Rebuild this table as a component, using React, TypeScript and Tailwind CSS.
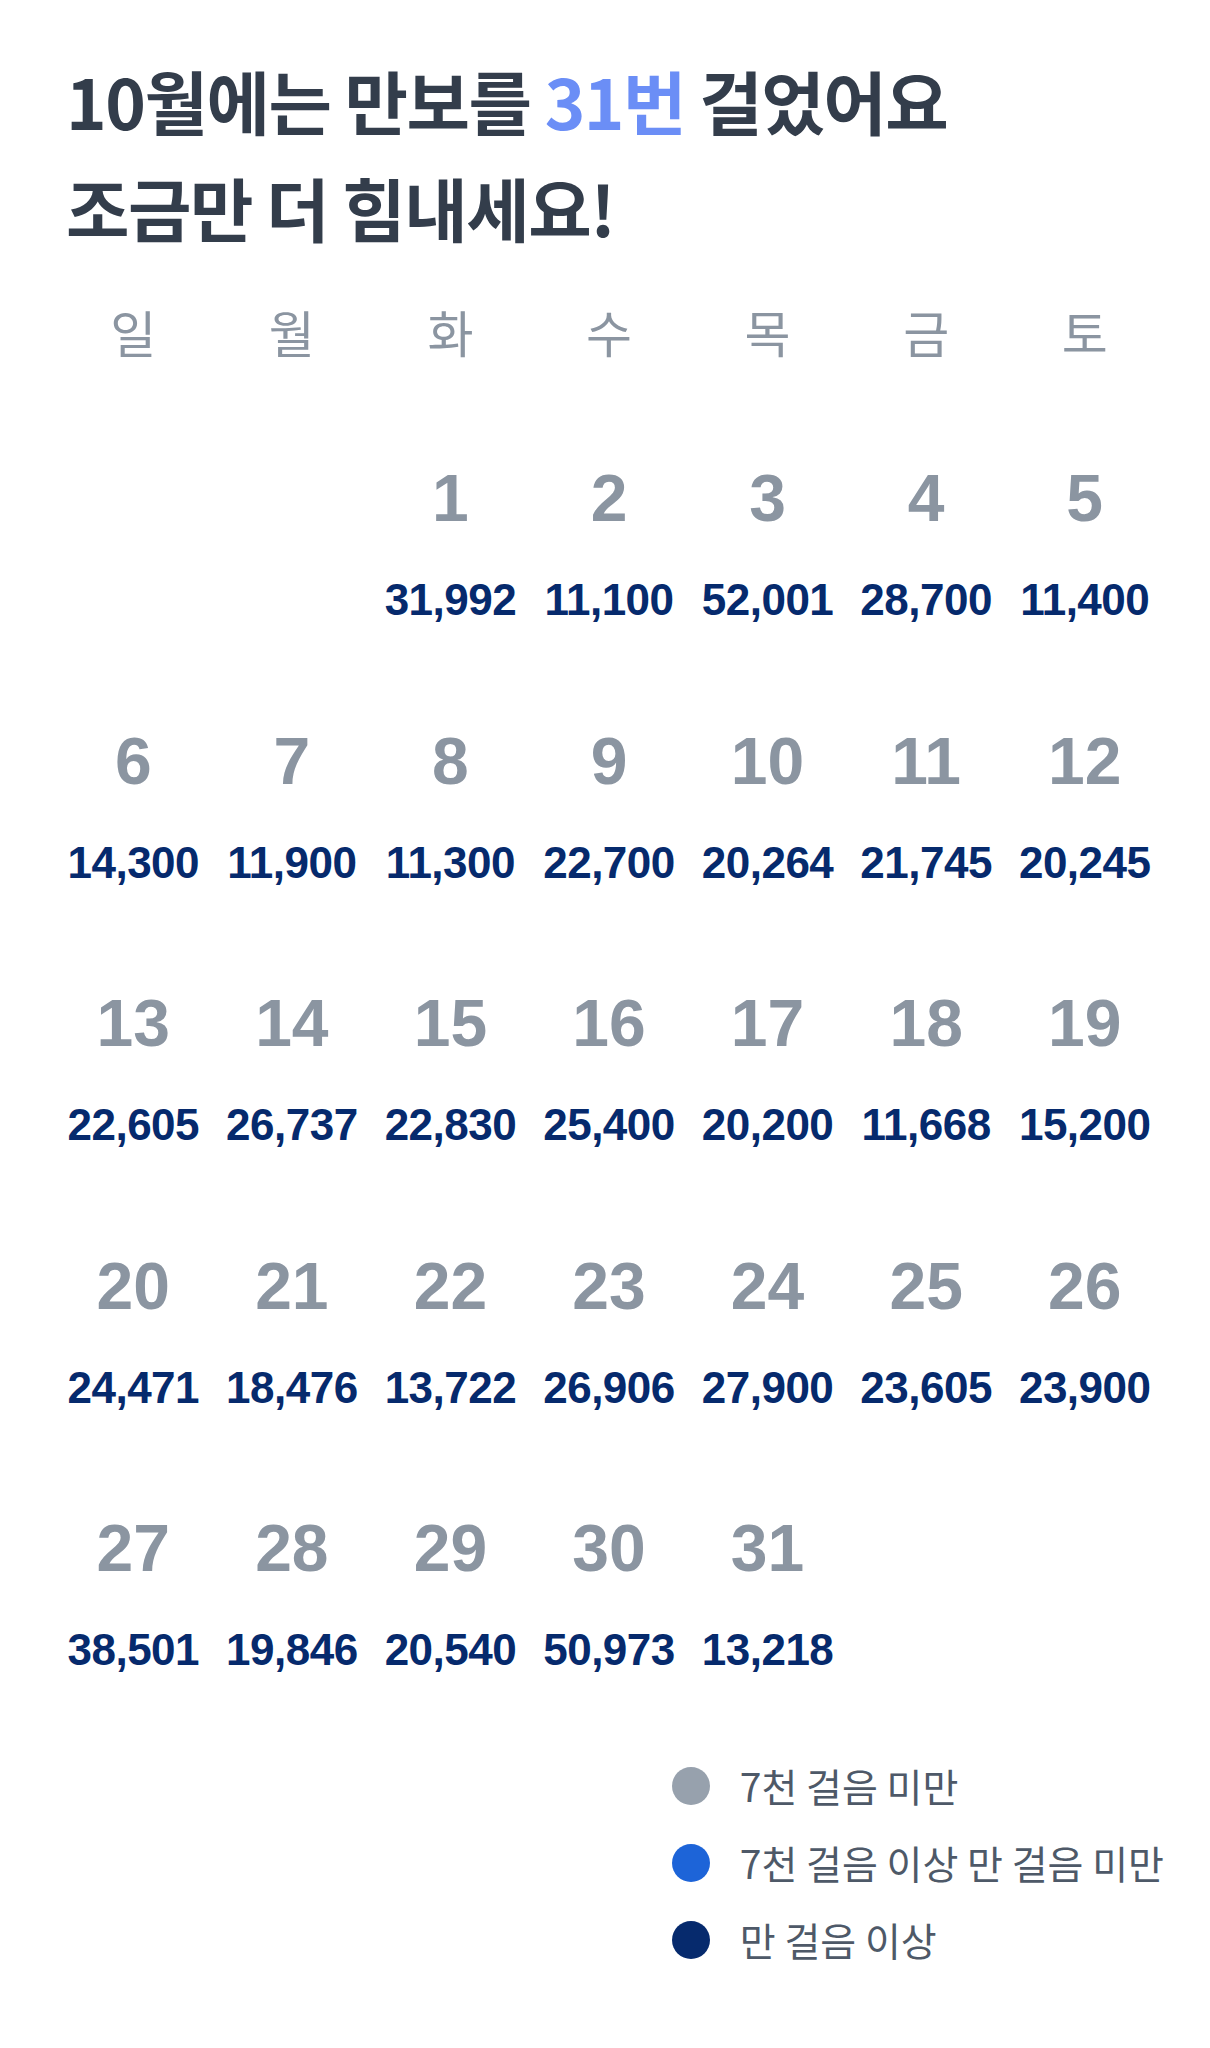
import React from 'react';

const WEEKDAYS = ['일', '월', '화', '수', '목', '금', '토'];

const STEPS: Record<number, number> = {
  1: 31992, 2: 11100, 3: 52001, 4: 28700, 5: 11400,
  6: 14300, 7: 11900, 8: 11300, 9: 22700, 10: 20264, 11: 21745, 12: 20245,
  13: 22605, 14: 26737, 15: 22830, 16: 25400, 17: 20200, 18: 11668, 19: 15200,
  20: 24471, 21: 18476, 22: 13722, 23: 26906, 24: 27900, 25: 23605, 26: 23900,
  27: 38501, 28: 19846, 29: 20540, 30: 50973, 31: 13218,
};

const FIRST_WEEKDAY = 2; // 10월 1일 = 화요일

const LEGEND = [
  { color: 'bg-[#97a1ad]', label: '7천 걸음 미만' },
  { color: 'bg-[#1d64d8]', label: '7천 걸음 이상 만 걸음 미만' },
  { color: 'bg-[#062a6d]', label: '만 걸음 이상' },
];

function stepColor(n: number) {
  if (n < 7000) return 'text-[#97a1ad]';
  if (n < 10000) return 'text-[#1d64d8]';
  return 'text-[#062a6d]';
}

function DayCell({ day }: { day: number }) {
  const steps = STEPS[day];
  return (
    <div className="flex h-[172px] flex-col items-center">
      <div className="h-[80px] text-[66px] font-bold leading-[80px] text-[#8b95a1] font-['Liberation_Sans',sans-serif]">
        {day}
      </div>
      <div
        className={`mt-[32px] h-[60px] text-[44px] font-bold leading-[60px] tracking-[-0.5px] font-['Liberation_Sans',sans-serif] ${stepColor(steps)}`}
      >
        {steps.toLocaleString('en-US')}
      </div>
    </div>
  );
}

export default function App() {
  const cells: (number | null)[] = [
    ...Array(FIRST_WEEKDAY).fill(null),
    ...Array.from({ length: 31 }, (_, i) => i + 1),
  ];

  return (
    <div className="min-h-[2048px] bg-white pt-[47px] pb-[60px] font-['Noto_Sans_CJK_KR',sans-serif]">
      <h1 className="pl-[66px] text-[69px] font-bold leading-[107px] tracking-[-1.5px] text-[#333d4b]">
        10월에는 만보를 <span className="text-[#6b8ef6]">31번</span> 걸었어요
        <br />
        조금만 더 힘내세요!
      </h1>

      <div className="ml-[54px] w-[1110px]">
        <div className="mt-[35px] grid h-[70px] grid-cols-7">
          {WEEKDAYS.map((w) => (
            <div key={w} className="text-center text-[50px] font-normal leading-[70px] text-[#8b95a1]">
              {w}
            </div>
          ))}
        </div>

        <div className="mt-[92px] grid grid-cols-7 gap-y-[90.6px]">
          {cells.map((d, i) => (d ? <DayCell key={i} day={d} /> : <div key={i} />))}
        </div>
      </div>

      <div className="mt-[67px] flex justify-end pr-[46px]">
        <ul className="flex flex-col">
          {LEGEND.map((item) => (
            <li key={item.label} className="flex h-[77px] items-center gap-[30px]">
              <span className={`h-[38px] w-[38px] shrink-0 rounded-full ${item.color}`} />
              <span className="text-[39px] leading-[77px] text-[#4e5968]">{item.label}</span>
            </li>
          ))}
        </ul>
      </div>
    </div>
  );
}
